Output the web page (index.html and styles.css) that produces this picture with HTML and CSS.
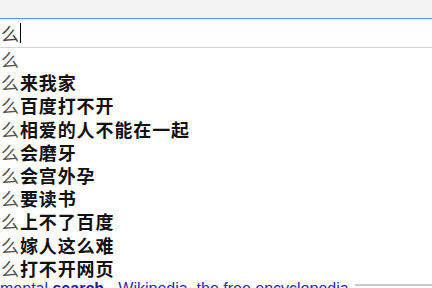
FILE: index.html
```html
<!DOCTYPE html>
<html lang="zh-CN">
<head>
	<meta charset="UTF-8">
	<title>么</title>
	<link rel="stylesheet" href="styles.css">
</head>
<body>
	<div class="toolbar"></div>

	<div class="search">
		<span class="search__text">么</span><span class="search__caret"></span>
	</div>

	<ul class="suggest">
		<li class="suggest__item">么</li>
		<li class="suggest__item">么<b>来我家</b></li>
		<li class="suggest__item">么<b>百度打不开</b></li>
		<li class="suggest__item">么<b>相爱的人不能在一起</b></li>
		<li class="suggest__item">么<b>会磨牙</b></li>
		<li class="suggest__item">么<b>会宫外孕</b></li>
		<li class="suggest__item">么<b>要读书</b></li>
		<li class="suggest__item">么<b>上不了百度</b></li>
		<li class="suggest__item">么<b>嫁人这么难</b></li>
		<li class="suggest__item">么<b>打不开网页</b></li>
	</ul>

	<div class="result">
		<a class="result__link" href="#">mental <b>search</b> - Wikipedia, the free encyclopedia</a>
		<span class="result__rule"></span>
	</div>
</body>
</html>
```

FILE: styles.css
```css
*, *::after, *::before {
	box-sizing: border-box;
}

body {
	margin: 0;
	width: 432px;
	height: 288px;
	overflow: hidden;
	background: #fff;
	font-family: "Noto Sans CJK SC", "Liberation Sans", sans-serif;
}

.toolbar {
	height: 18px;
	background: #f3f3f3;
}

.search {
	display: flex;
	align-items: center;
	height: 30px;
	padding-left: 1px;
	border-top: 1px solid #6e8dd3;
	border-bottom: 1px solid #d4d4d4;
	background: linear-gradient(#dfe8f8 0, #fdfdfd 2px, #fff 100%);
	color: #444;
	font-size: 18px;
}

.search__text {
	line-height: 20px;
}

.search__caret {
	width: 1px;
	height: 20px;
	margin-left: 1px;
	background: #000;
}

.suggest {
	margin: 0;
	padding: 0;
	list-style: none;
}

.suggest__item {
	height: 23.2px;
	line-height: 23px;
	padding-left: 1px;
	font-size: 18px;
	letter-spacing: 0.9px;
	color: #555;
	white-space: nowrap;
}

.suggest__item b {
	color: #111;
	font-weight: bold;
}

.result {
	display: flex;
	align-items: flex-start;
	height: 20px;
	margin-top: 0;
}

.result__link {
	color: #2a2ab0;
	text-decoration: none;
	font-family: "Liberation Sans", Arial, sans-serif;
	font-size: 16px;
	line-height: 18px;
	white-space: nowrap;
}

.result__link b {
	color: #1a1a9a;
}

.result__rule {
	flex: 1;
	height: 2px;
	margin-top: 4px;
	margin-left: 6px;
	background: #c8c8c8;
}
```
